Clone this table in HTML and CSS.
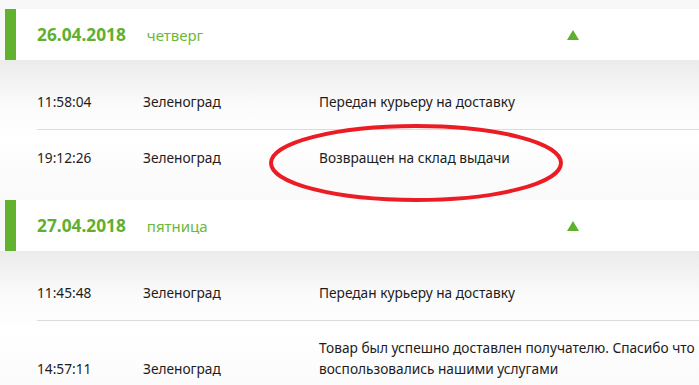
FILE: index.html
```html
<!DOCTYPE html>
<html lang="ru">
<head>
<meta charset="utf-8">
<link rel="stylesheet" href="styles.css">
</head>
<body>
<div class="page">
  <section class="group">
    <div class="day-head">
      <span class="date">26.04.2018</span>
      <span class="weekday">четверг</span>
      <span class="toggle" aria-label="свернуть"></span>
    </div>
    <div class="rows">
      <div class="row">
        <span class="time">11:58:04</span>
        <span class="city">Зеленоград</span>
        <span class="status">Передан курьеру на доставку</span>
      </div>
      <div class="row">
        <span class="time">19:12:26</span>
        <span class="city">Зеленоград</span>
        <span class="status">Возвращен на склад выдачи</span>
      </div>
    </div>
  </section>
  <section class="group">
    <div class="day-head">
      <span class="date">27.04.2018</span>
      <span class="weekday">пятница</span>
      <span class="toggle" aria-label="свернуть"></span>
    </div>
    <div class="rows">
      <div class="row">
        <span class="time">11:45:48</span>
        <span class="city">Зеленоград</span>
        <span class="status">Передан курьеру на доставку</span>
      </div>
      <div class="row row-tall">
        <span class="time">14:57:11</span>
        <span class="city">Зеленоград</span>
        <span class="status">Товар был успешно доставлен получателю. Спасибо что воспользовались нашими услугами</span>
      </div>
    </div>
  </section>
  <svg class="mark" width="310" height="90" viewBox="0 0 310 90" aria-hidden="true">
    <ellipse cx="149" cy="41" rx="145" ry="37" fill="none" stroke="#ec1c24" stroke-width="4"/>
  </svg>
</div>
</body>
</html>
```

FILE: styles.css
```css
html, body {
  margin: 0;
  padding: 0;
}
body {
  background: #f8f8f8;
  font-family: "Noto Sans", "Open Sans", sans-serif;
  color: #1c1c1c;
  overflow: hidden;
}
.page {
  position: relative;
  padding-top: 9px;
  width: 699px;
}
.day-head {
  display: flex;
  align-items: center;
  height: 51px;
  margin-left: 5px;
  padding-left: 21px;
  padding-right: 120px;
  background: #fff;
  border-left: 11px solid #63b22f;
}
.date {
  font-weight: bold;
  font-size: 17.3px;
  color: #5fb02e;
}
.weekday {
  margin-left: 21px;
  font-size: 15px;
  color: #6cb83a;
}
.toggle {
  margin-left: auto;
  width: 0;
  height: 0;
  border-left: 6px solid transparent;
  border-right: 6px solid transparent;
  border-bottom: 10px solid #5db12c;
}
.rows {
  padding: 14px 0 15px;
  background: linear-gradient(#ebebeb 0, #fbfbfb 45px, #ffffff 80px, #f9f9f9 100%);
}
.row {
  display: grid;
  grid-template-columns: 106px 176px 390px;
  align-items: center;
  margin-left: 37px;
  padding: 17px 0;
  font-size: 13.7px;
  line-height: 21px;
}
.row + .row {
  border-top: 1px solid #dcdcdc;
}
.row-tall {
  padding-top: 16px;
  align-items: end;
}
.mark {
  position: absolute;
  left: 267px;
  top: 122px;
}
```
